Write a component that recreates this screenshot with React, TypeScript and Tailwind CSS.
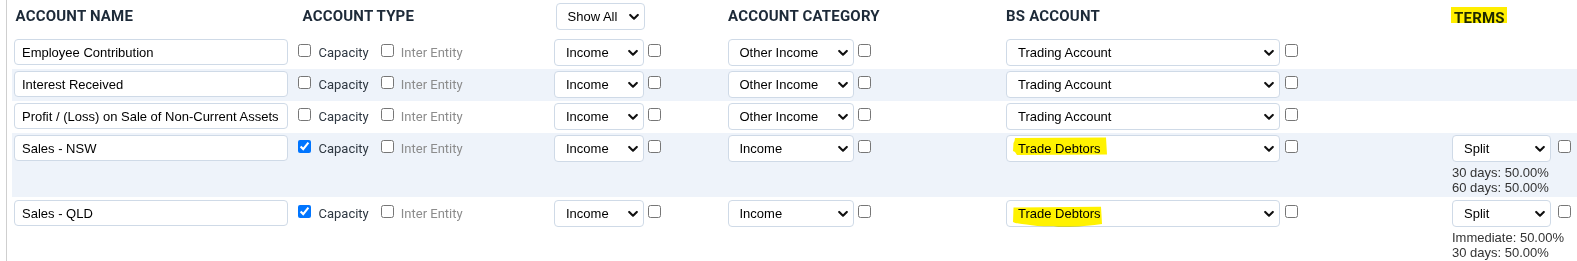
import React from "react";

type Row = {
  name: string;
  cap: boolean;
  cat: string;
  bs: string;
  striped: boolean;
  height: string;
  pad: string;
  terms?: { value: string; lines: string[] };
  mark?: 1 | 2;
};

const rows: Row[] = [
  { name: "Employee Contribution", cap: false, cat: "Other Income", bs: "Trading Account", striped: false, height: "h-[32px]", pad: "pt-[2px]" },
  { name: "Interest Received", cap: false, cat: "Other Income", bs: "Trading Account", striped: true, height: "h-[32px]", pad: "pt-[2px]" },
  { name: "Profit / (Loss) on Sale of Non-Current Assets", cap: false, cat: "Other Income", bs: "Trading Account", striped: false, height: "h-[32px]", pad: "pt-[2px]" },
  { name: "Sales - NSW", cap: true, cat: "Income", bs: "Trade Debtors", striped: true, height: "h-[64px]", pad: "pt-[2px]", terms: { value: "Split", lines: ["30 days: 50.00%", "60 days: 50.00%"] }, mark: 1 },
  { name: "Sales - QLD", cap: true, cat: "Income", bs: "Trade Debtors", striped: false, height: "h-[64px]", pad: "pt-[3px]", terms: { value: "Split", lines: ["Immediate: 50.00%", "30 days: 50.00%"] }, mark: 2 },
];

const grid = "grid grid-cols-[282px_260px_173px_279px_445px_1fr]";

function Chevron() {
  return (
    <svg className="pointer-events-none absolute right-[6px] top-1/2 -translate-y-1/2" width="10" height="7" viewBox="0 0 10 7">
      <path d="M1.2 1.4 L5 5.2 L8.8 1.4" fill="none" stroke="#111" strokeWidth="2.1" strokeLinecap="round" strokeLinejoin="round" />
    </svg>
  );
}

function Select({ value, w, h = "h-[27px]", mark }: { value: string; w: string; h?: string; mark?: 1 | 2 }) {
  return (
    <div className={`relative ${w} ${h} shrink-0`}>
      <select
        defaultValue={value}
        className={`block w-full h-full appearance-none rounded-[4px] border border-[#cfdae7] bg-white pl-[11px] pr-[20px] text-[13px] text-black font-['Liberation_Sans',Arial,sans-serif] outline-none`}
      >
        <option>{value}</option>
      </select>
      <Chevron />
      {mark === 1 && (
        <svg className="pointer-events-none absolute left-[6px] top-[2px] mix-blend-multiply" width="96" height="19" viewBox="0 0 96 19">
          <path d="M3 1 L94 0.6 L95 17.5 L5 18 L3 15 L1 14 L1.5 6 L2.5 4 Z" fill="#fff200" />
        </svg>
      )}
      {mark === 2 && (
        <svg className="pointer-events-none absolute left-[6px] top-[6px] mix-blend-multiply" width="92" height="22" viewBox="0 0 92 22">
          <path d="M1.5 1.5 L89 0.8 L90 18 C 80 19.5, 70 20.5, 58 20.8 C 46 21, 40 20, 34 20.2 C 24 20.5, 16 18.5, 10 18 C 6 17.8, 3 17, 1 16 Z" fill="#fff200" />
        </svg>
      )}
    </div>
  );
}

function Check({ checked, className = "" }: { checked: boolean; className?: string }) {
  return (
    <input
      type="checkbox"
      defaultChecked={checked}
      className={`m-0 h-[13px] w-[13px] shrink-0 ${className}`}
    />
  );
}

const head = "font-['Roboto',sans-serif] font-bold text-[15px] leading-[15px] text-[#1d2a38] tracking-[0.2px] whitespace-nowrap";

export default function App() {
  return (
    <div className="w-[1577px] h-[261px] overflow-hidden bg-white pl-[6px]">
      <div className="h-full border-l border-[#cfcfcf] pl-[5px]">
        {/* header */}
        <div className={`${grid} h-[37px] pb-[4px] items-center`}>
          <div className={`${head} pl-[3.5px]`}>ACCOUNT NAME</div>
          <div className={`${head} pl-[8.5px]`}>ACCOUNT TYPE</div>
          <div className="pl-[1.5px]">
            <Select value="Show All" w="w-[89px]" />
          </div>
          <div className={`${head} pl-[1px]`}>ACCOUNT CATEGORY</div>
          <div className={`${head}`}>BS ACCOUNT</div>
          <div className="pl-[3px]">
            <span className={`${head} relative inline-block`}>
              TERMS
              <span className="pointer-events-none absolute left-[-3.5px] right-[-2px] top-[-3.5px] h-[15.5px] bg-[#ffee00] mix-blend-multiply" />
            </span>
          </div>
        </div>

        {rows.map((r, i) => (
          <div key={i} className={`${grid} ${r.height} ${r.pad} items-start ${r.striped ? "bg-[#eef3fa]" : "bg-white"}`}>
            <div className="pl-[2px]">
              <input
                type="text"
                defaultValue={r.name}
                className="block h-[26px] w-[274px] rounded-[4px] border border-[#cfdae7] bg-white px-[7px] text-[13px] text-black font-['Liberation_Sans',Arial,sans-serif] outline-none"
              />
            </div>
            <div className="flex items-start pl-[4px] font-['Roboto',sans-serif] text-[13px] leading-[15px]">
              <Check checked={r.cap} className="mt-[5px]" />
              <span className="ml-[7.5px] mt-[6px] text-[#2f3842]">Capacity</span>
              <Check checked={false} className="ml-[12.5px] mt-[5px]" />
              <span className="ml-[6.5px] mt-[6px] text-[#8c8c8c]">Inter Entity</span>
            </div>
            <div className="flex items-start">
              <Select value="Income" w="w-[90px]" />
              <Check checked={false} className="ml-[4px] mt-[5px]" />
            </div>
            <div className="flex items-start pl-[0.5px]">
              <Select value={r.cat} w="w-[126px]" />
              <Check checked={false} className="ml-[4px] mt-[5px]" />
            </div>
            <div className="flex items-start">
              <Select value={r.bs} w="w-[274px]" mark={r.mark} />
              <Check checked={false} className="ml-[5px] mt-[5px]" />
            </div>
            <div className="pl-[1px]">
              {r.terms && (
                <>
                  <div className="flex items-start">
                    <Select value={r.terms.value} w="w-[99px]" />
                    <Check checked={false} className="ml-[7px] mt-[5px]" />
                  </div>
                  <div className="mt-[3px] font-['Liberation_Sans',Arial,sans-serif] text-[13px] leading-[15px] text-[#333]">
                    {r.terms.lines.map((l) => (
                      <div key={l}>{l}</div>
                    ))}
                  </div>
                </>
              )}
            </div>
          </div>
        ))}
      </div>
    </div>
  );
}
